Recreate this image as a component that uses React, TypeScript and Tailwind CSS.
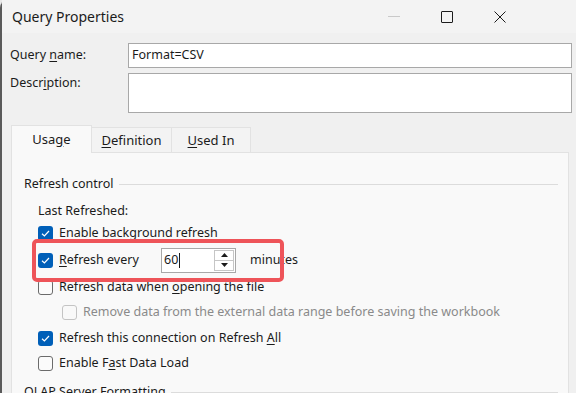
import React from "react";

const font = { fontFamily: "'Noto Sans', 'Open Sans', sans-serif" };

function Check({ checked, disabled }: { checked?: boolean; disabled?: boolean }) {
  if (checked) {
    return (
      <div className="w-[15px] h-[15px] rounded-[3px] bg-[#005fb8] flex items-center justify-center shrink-0">
        <svg width="11" height="11" viewBox="0 0 11 11">
          <path d="M2 5.8 L4.4 8 L9 3" fill="none" stroke="#fff" strokeWidth="1.2" />
        </svg>
      </div>
    );
  }
  return (
    <div
      className={
        "w-[15px] h-[15px] rounded-[3px] border shrink-0 " +
        (disabled ? "border-[#c4c4c4] bg-[#f9f9f9]" : "border-[#6b6b6b] bg-[#fbfbfb]")
      }
    />
  );
}

function Row({
  h,
  indent,
  checked,
  disabled,
  children,
}: {
  h: string;
  indent?: boolean;
  checked?: boolean;
  disabled?: boolean;
  children: React.ReactNode;
}) {
  return (
    <div className={"flex items-center gap-[6px] " + h + (indent ? " pl-[50px]" : " pl-[26px]")}>
      <Check checked={checked} disabled={disabled} />
      <span className={disabled ? "text-[#8a8a8a]" : "text-[#1b1b1b]"}>{children}</span>
    </div>
  );
}

export default function App() {
  return (
    <div className="w-[576px] h-[393px] overflow-hidden bg-[#e8e8e8] text-[12.5px] text-[#1b1b1b] leading-none" style={font}>
      <div className="h-full flex flex-col bg-[#f0f0f0] border-l-[2px] border-[#5a5a5a] rounded-tl-[8px]">
        {/* title bar */}
        <div className="h-[33px] shrink-0 flex items-center bg-[#f3f3f3] pl-[10px]">
          <span className="text-[14px] text-[#1b1b1b]">Query Properties</span>
          <div className="ml-auto flex items-center pr-[50px]">
            <div className="w-[53px] h-[33px] flex items-center justify-center">
              <div className="w-[12px] h-[1px] bg-[#c9c9c9]" />
            </div>
            <div className="w-[53px] h-[33px] flex items-center justify-center">
              <div className="w-[12px] h-[12px] border border-[#1b1b1b] rounded-[1px]" />
            </div>
            <div className="w-[53px] h-[33px] flex items-center justify-center">
              <svg width="12" height="12" viewBox="0 0 12 12">
                <path d="M0.5 0.5 L11.5 11.5 M11.5 0.5 L0.5 11.5" stroke="#1b1b1b" strokeWidth="1" />
              </svg>
            </div>
          </div>
        </div>

        {/* body */}
        <div className="flex flex-col pl-[8px] pr-[4px]">
          <div className="mt-[10px] flex items-center h-[25px]">
            <span className="w-[118px]">
              Query <u className="underline-offset-2">n</u>ame:
            </span>
            <div className="flex-1 h-[25px] bg-white border border-[#a8a8a8] flex items-center pl-[3px]">
              Format=CSV
            </div>
          </div>
          <div className="mt-[5px] flex items-start h-[40px]">
            <span className="w-[118px] pt-[4px]">
              Descr<u className="underline-offset-2">i</u>ption:
            </span>
            <div className="flex-1 h-[40px] bg-white border border-[#a8a8a8]" />
          </div>

          {/* tabs */}
          <div className="mt-[12px] ml-[1px] flex items-end h-[27px]">
            <div className="w-[81px] h-[28px] -mb-[1px] bg-[#f9f9f9] border border-b-0 border-[#e2e2e2] flex items-center justify-center text-[13px] relative z-10">
              Usa<u className="underline-offset-2">g</u>e
            </div>
            <div className="w-[80px] h-[25px] bg-[#f3f3f3] border border-l-0 border-b-0 border-[#e2e2e2] flex items-center justify-center text-[13px]">
              <u className="underline-offset-2">D</u>efinition
            </div>
            <div className="w-[79px] h-[25px] bg-[#f3f3f3] border border-l-0 border-b-0 border-[#e2e2e2] flex items-center justify-center text-[13px]">
              <u className="underline-offset-2">U</u>sed In
            </div>
          </div>

          {/* panel */}
          <div className="ml-[1px] mr-[3px] h-[260px] bg-[#f9f9f9] border border-[#e2e2e2] pt-[23px]">
            <div className="flex items-center h-[16px] pl-[12px] pr-[10px] gap-[5px]">
              <span>Refresh control</span>
              <div className="flex-1 h-[1px] bg-[#dcdcdc]" />
            </div>
            <div className="mt-[8px] h-[22px] flex items-center pl-[26px]">Last Refreshed:</div>
            <Row h="h-[22px]" checked>
              Enable background refresh
            </Row>

            <div className="relative h-[32px] flex items-center pl-[26px]">
              <div className="absolute left-[20px] top-[-5px] w-[252px] h-[43px] border-[4px] border-[#ee5459] rounded-[5px]" />
              <Check checked />
              <span className="ml-[6px] w-[102px]">
                <u className="underline-offset-2">R</u>efresh every
              </span>
              <div className="w-[75px] h-[25px] bg-white border border-[#a8a8a8] flex items-center">
                <span className="pl-[2px]">60</span>
                <div className="w-[1px] h-[15px] bg-[#1b1b1b] ml-[1px]" />
                <div className="ml-auto mr-[1px] w-[20px] h-[21px] flex flex-col border border-[#c6c6c6]">
                  <div className="flex-1 flex items-center justify-center border-b border-[#c6c6c6]">
                    <svg width="7" height="4" viewBox="0 0 7 4">
                      <path d="M0 4 L3.5 0 L7 4 Z" fill="#1b1b1b" />
                    </svg>
                  </div>
                  <div className="flex-1 flex items-center justify-center">
                    <svg width="7" height="4" viewBox="0 0 7 4">
                      <path d="M0 0 L3.5 4 L7 0 Z" fill="#1b1b1b" />
                    </svg>
                  </div>
                </div>
              </div>
              <span className="ml-[14px]">minutes</span>
            </div>

            <Row h="h-[22px]">
              Refresh data when <u className="underline-offset-2">o</u>pening the file
            </Row>
            <Row h="h-[29px]" indent disabled>
              Remove data from the external data range before saving the workbook
            </Row>
            <Row h="h-[22px]" checked>
              Refresh this connection on Refresh <u className="underline-offset-2">A</u>ll
            </Row>
            <Row h="h-[28px]">
              Enable F<u className="underline-offset-2">a</u>st Data Load
            </Row>
            <div className="flex items-center h-[30px] pl-[12px] pr-[10px] gap-[5px]">
              <span>OLAP Server Formatting</span>
              <div className="flex-1 h-[1px] bg-[#dcdcdc]" />
            </div>
          </div>
        </div>
      </div>
    </div>
  );
}
